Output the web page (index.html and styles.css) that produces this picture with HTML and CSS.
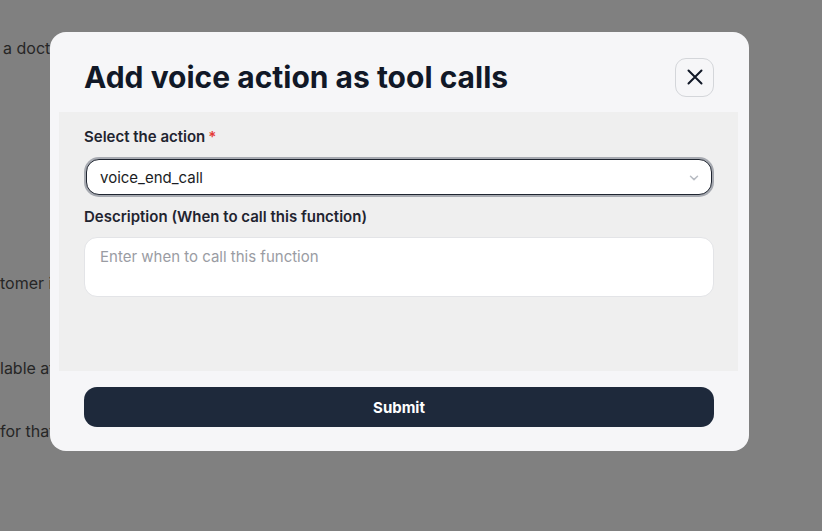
FILE: index.html
```html
<!DOCTYPE html>
<html lang="en">
<head>
<meta charset="utf-8">
<title>Add voice action as tool calls</title>
<link rel="stylesheet" href="styles.css">
</head>
<body>
<div class="page">
  <p class="bg-line l1">a doctor appointment</p>
  <p class="bg-line l2">tomer is</p>
  <p class="bg-line l3">lable at</p>
  <p class="bg-line l4">for that</p>
</div>
<div class="overlay">
  <div class="modal">
    <div class="modal-header">
      <h1 class="modal-title">Add voice action as tool calls</h1>
      <button class="close-btn" aria-label="Close">
        <svg width="20" height="20" viewBox="0 0 20 20" fill="none" stroke="#111827" stroke-width="2" stroke-linecap="round">
          <path d="M3.5 3.5 L16.5 16.5 M16.5 3.5 L3.5 16.5"/>
        </svg>
      </button>
    </div>
    <div class="modal-body">
      <label class="field-label">Select the action<span class="req">*</span></label>
      <div class="select">
        <span class="select-value">voice_end_call</span>
        <svg class="chevron" width="10" height="6" viewBox="0 0 10 6" fill="none" stroke="#b8bcc3" stroke-width="1.5" stroke-linecap="round" stroke-linejoin="round">
          <path d="M1.5 1.2 L5 4.6 L8.5 1.2"/>
        </svg>
      </div>
      <label class="field-label second">Description (When to call this function)</label>
      <div class="textarea"><span class="placeholder">Enter when to call this function</span></div>
    </div>
    <div class="modal-footer">
      <button class="submit-btn">Submit</button>
    </div>
  </div>
</div>
</body>
</html>
```
FILE: styles.css
```css
* { box-sizing: border-box; }
html, body {
  margin: 0;
  padding: 0;
  width: 822px;
  height: 531px;
  overflow: hidden;
  background: #808080;
  font-family: Inter, "Noto Sans", sans-serif;
}
.page {
  position: absolute;
  inset: 0;
  color: #262626;
  font-size: 16px;
}
.bg-line {
  position: absolute;
  margin: 0;
  line-height: 20px;
  white-space: nowrap;
}
.l1 { left: 3px; top: 38px; }
.l2 { left: 0; top: 273px; }
.l3 { left: 0; top: 358px; }
.l4 { left: 0; top: 421px; }
.overlay {
  position: absolute;
  inset: 0;
}
.modal {
  position: absolute;
  left: 50px;
  top: 32px;
  width: 699px;
  height: 419px;
  background: #f6f6f8;
  border-radius: 16px;
  display: flex;
  flex-direction: column;
}
.modal-header {
  height: 80px;
  padding: 0 35px 0 34px;
  display: flex;
  align-items: center;
  justify-content: space-between;
}
.modal-title {
  margin: 0;
  font-size: 30px;
  line-height: 36px;
  font-weight: 700;
  color: #111827;
  padding-top: 10px;
}
.close-btn {
  width: 39px;
  height: 39px;
  border: 1px solid #d4d6da;
  border-radius: 11px;
  background: #f6f6f8;
  display: flex;
  align-items: center;
  justify-content: center;
  padding: 0;
  margin-top: 10px;
}
.modal-body {
  margin: 0 11px 0 9px;
  height: 259px;
  background: #efefef;
  padding: 15px 24px 0 25px;
  display: flex;
  flex-direction: column;
}
.field-label {
  font-size: 15px;
  line-height: 20px;
  font-weight: 600;
  color: #1f2430;
}
.field-label.second { margin-top: 10px; }
.req {
  color: #e53935;
  margin-left: 3px;
}
.select {
  background: #fff;
  border: 1.5px solid #1f2530;
  box-shadow: 0 0 0 2px #a7aab1;
  border-radius: 13px;
  margin: 12px 2px 2px 2px;
  height: 36px;
  display: flex;
  align-items: center;
  justify-content: space-between;
  padding: 0 12px 0 13px;
}
.select-value {
  font-size: 15px;
  color: #1a1d24;
}
.chevron { margin-top: 1px; }
.textarea {
  margin-top: 10px;
  height: 60px;
  background: #fff;
  border: 1px solid #e3e4e7;
  border-radius: 13px;
  padding: 8px 15px;
}
.placeholder {
  font-size: 15px;
  line-height: 20px;
  color: #9a9ca3;
}
.modal-footer {
  padding: 16px 35px 0 34px;
}
.submit-btn {
  width: 100%;
  height: 40px;
  border: none;
  border-radius: 13px;
  background: #1e293b;
  color: #fff;
  font-family: Inter, "Noto Sans", sans-serif;
  font-size: 15px;
  font-weight: 700;
}
```
